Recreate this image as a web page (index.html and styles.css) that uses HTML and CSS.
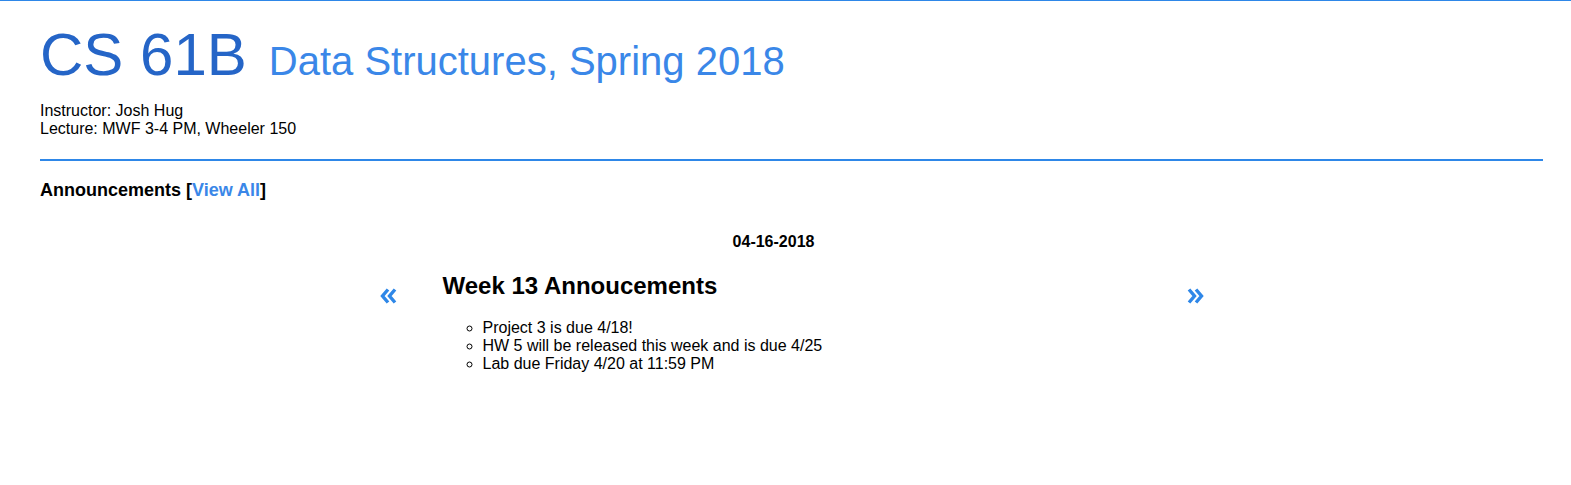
FILE: index.html
```html
<!DOCTYPE html>
<html lang="en">
<head>
<meta charset="UTF-8">
<meta name="viewport" content="width=device-width, initial-scale=1.0">
<title>CS 61B Spring 2018</title>
<link rel="stylesheet" href="styles.css">
</head>
<body>
<div class="page">
  <header class="header">
    <h1 class="title"><span class="course">CS 61B</span><span class="subtitle">Data Structures, Spring 2018</span></h1>
    <div class="info">
      Instructor: Josh Hug<br>
      Lecture: MWF 3-4 PM, Wheeler 150
    </div>
  </header>

  <hr class="divider">

  <h3 class="section-title">Announcements [<a href="#" class="link">View All</a>]</h3>

  <div class="carousel">
    <a href="#" class="arrow">
      <svg width="17" height="16" viewBox="0 0 17 16"><path d="M8 1.5 L2.5 8 L8 14.5 M15 1.5 L9.5 8 L15 14.5" fill="none" stroke="#2e87e8" stroke-width="3.4"/></svg>
    </a>
    <div class="slide">
      <div class="date">04-16-2018</div>
      <h2 class="slide-title">Week 13 Annoucements</h2>
      <ul class="items">
        <li>Project 3 is due 4/18!</li>
        <li>HW 5 will be released this week and is due 4/25</li>
        <li>Lab due Friday 4/20 at 11:59 PM</li>
      </ul>
    </div>
    <a href="#" class="arrow">
      <svg width="17" height="16" viewBox="0 0 17 16"><path d="M2 1.5 L7.5 8 L2 14.5 M9 1.5 L14.5 8 L9 14.5" fill="none" stroke="#2e87e8" stroke-width="3.4"/></svg>
    </a>
  </div>
</div>
</body>
</html>
```

FILE: styles.css
```css
body {
  font-family: "Liberation Sans", Arial, sans-serif;
  font-size: 16px;
  color: #000;
  background-color: #fff;
  margin: 0;
  border-top: 1px solid #2e87e8;
}

.page {
  padding: 0 28px 0 40px;
}

.title {
  margin: 19px 0 0 0;
  font-weight: normal;
  line-height: 69px;
}

.course {
  font-size: 60px;
  color: #2565c7;
}

.subtitle {
  font-size: 40px;
  color: #3a87e8;
  margin-left: 22px;
}

.info {
  margin-top: 3px;
  line-height: 18.4px;
}

.divider {
  border: none;
  border-top: 2px solid #2e87e8;
  margin: 20px 0 0 0;
}

.section-title {
  font-size: 18px;
  margin: 19px 0 0 0;
}

.link {
  color: #3a87e8;
  text-decoration: none;
}

.carousel {
  display: grid;
  grid-template-columns: 17px 662px 17px;
  column-gap: 46px;
  width: 824px;
  margin: 32px auto 0 auto;
}

.carousel .arrow:last-child {
  margin-left: 36px;
}

.arrow {
  display: block;
  margin-top: 55px;
  height: 16px;
}

.arrow svg {
  display: block;
}

.date {
  text-align: center;
  font-weight: bold;
}

.slide-title {
  font-size: 24px;
  margin: 21px 0 0 0;
}

.items {
  list-style-type: circle;
  margin: 19px 0 0 0;
  padding-left: 40px;
}
```
